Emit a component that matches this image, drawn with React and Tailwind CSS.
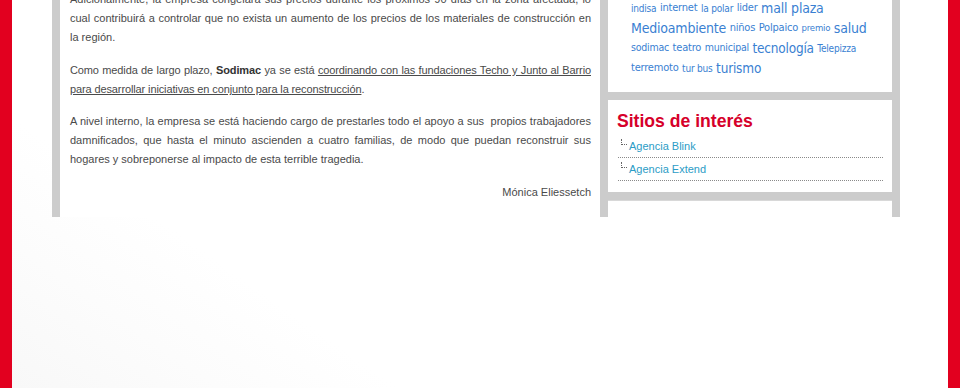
import React from "react";

const tagLines = [
  [
    ["indisa", "text-[10px]"],
    ["internet", "text-[11px]"],
    ["la polar", "text-[10px]"],
    ["lider", "text-[11px]"],
    ["mall plaza", "text-[14px]"],
  ],
  [
    ["Medioambiente", "text-[14px]"],
    ["niños", "text-[11px]"],
    ["Polpaico", "text-[11px]"],
    ["premio", "text-[9.5px]"],
    ["salud", "text-[14px]"],
  ],
  [
    ["sodimac", "text-[10.5px]"],
    ["teatro", "text-[11px]"],
    ["municipal", "text-[10.5px]"],
    ["tecnología", "text-[13.5px]"],
    ["Telepizza", "text-[10px]"],
  ],
  [
    ["terremoto", "text-[11px]"],
    ["tur bus", "text-[10px]"],
    ["turismo", "text-[13.5px]"],
  ],
];

const sites = ["Agencia Blink", "Agencia Extend"];

const Elbow = () => (
  <span className="inline-block w-[6px] h-[6px] mt-[1px] ml-[3px] mr-[2px] border-l border-b border-dotted border-[#666] shrink-0"></span>
);

export default function App() {
  return (
    <div className="w-[960px] h-[388px] flex bg-white overflow-hidden font-['Liberation_Sans',Arial,sans-serif]">
      <div className="w-[12px] bg-[#e2001f]"></div>

      <div className="flex-1 bg-[linear-gradient(35deg,#f8f8f8_0%,#fcfcfc_14%,#ffffff_26%)]">
        <div className="ml-[40px] w-[848px] h-[217px] flex overflow-hidden">
          {/* article */}
          <div className="w-[548px] border-l-[8px] border-[#cccccc] bg-white pl-[10px] pr-[9px]">
            <div className="-mt-[10px] text-[11px] leading-[19px] text-[#4a4a4a] text-justify">
              <p className="mb-[14px]">
                Adicionalmente, la empresa congelará sus precios durante los
                próximos 90 días en la zona afectada, lo cual contribuirá a
                controlar que no exista un aumento de los precios de los
                materiales de construcción en la región.
              </p>
              <p className="mb-[13px] tracking-[-0.12px]">
                Como medida de largo plazo, <b className="text-[#333]">Sodimac</b> ya se está{" "}
                <u>
                  coordinando con las fundaciones Techo y Junto al Barrio para
                  desarrollar iniciativas en conjunto para la reconstrucción
                </u>
                .
              </p>
              <p className="mb-[14px]">
                A nivel interno, la empresa se está haciendo cargo de
                prestarles todo el apoyo a sus&nbsp; propios trabajadores
                damnificados, que hasta el minuto ascienden a cuatro familias,
                de modo que puedan reconstruir sus hogares y sobreponerse al
                impacto de esta terrible tragedia.
              </p>
              <p className="text-right">Mónica Eliessetch</p>
            </div>
          </div>

          {/* sidebar */}
          <div className="w-[300px] bg-[#cccccc] px-[8px] flex flex-col gap-[8px]">
            <div className="h-[92px] bg-white flex flex-col justify-end pl-[23px] pb-[14px] text-[#3a7fd2] font-['DejaVu_Sans_Condensed','DejaVu_Sans',sans-serif] [font-stretch:condensed]">
              {tagLines.map((line, i) => (
                <div key={i} className="h-[20px] flex items-center gap-[3.5px] whitespace-nowrap tracking-[-0.2px]">
                  {line.map(([t, size]) => (
                    <span key={t} className={size}>
                      {t}
                    </span>
                  ))}
                </div>
              ))}
            </div>

            <div className="bg-white pt-[10px] pb-[11px] pl-[10px] pr-[9px]">
              <h3 className="-ml-[1px] mb-[3px] text-[17.6px] leading-[22px] font-bold text-[#d6002a]">
                Sitios de interés
              </h3>
              {sites.map((s) => (
                <div
                  key={s}
                  className="flex items-start pt-[3px] pb-[3px] border-b border-dotted border-[#8a8a8a] text-[11px] leading-[16px]"
                >
                  <Elbow />
                  <span className="text-[#2b9cc6]">{s}</span>
                </div>
              ))}
            </div>

            <div className="h-[60px] bg-white border-t border-[#d8d8d8]"></div>
          </div>
        </div>
      </div>

      <div className="w-[12px] bg-[#e2001f]"></div>
    </div>
  );
}
